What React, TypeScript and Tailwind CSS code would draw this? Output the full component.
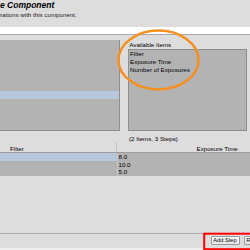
import React from "react";

export default function App() {
  return (
    <div className="relative w-[250px] h-[250px] overflow-hidden bg-[#dddddd] font-['Liberation_Sans',Arial,sans-serif] text-black flex flex-col">
      {/* Header */}
      <div className="h-[27px] shrink-0 pt-[1px] whitespace-nowrap">
        <div className="text-[8.5px] leading-[9px] font-bold italic">e Component</div>
        <div className="mt-[1px] text-[6.2px] leading-[7px] text-[#222]">rations with this component.</div>
      </div>
      {/* white strip */}
      <div className="h-[8px] shrink-0 bg-white border-b border-[#a8a8a8]" />
      {/* middle */}
      <div className="h-[96px] shrink-0 flex">
        <div className="w-[120px] shrink-0 mt-[5px] bg-[#b3b3b3] border-r border-b border-[#8e8e8e] flex flex-col">
          <div className="h-[51px] shrink-0" />
          <div className="h-[8px] shrink-0 bg-[#b7c7dc]" />
        </div>
        <div className="flex-1 pl-[8px] pt-[6px] pr-[3px] flex flex-col whitespace-nowrap">
          <div className="h-[8px] leading-[8px] text-[6.2px] pl-[1.3px]">Available Items</div>
          <div className="flex-1 bg-[#b3b3b3] border border-[#8e8e8e] text-[6.2px] pl-[1px]">
            <div className="h-[8px] leading-[8px]">Filter</div>
            <div className="h-[8px] leading-[8px]">Exposure Time</div>
            <div className="h-[8px] leading-[8px]">Number of Exposures</div>
          </div>
        </div>
      </div>
      {/* status */}
      <div className="h-[7px] shrink-0 mt-[4px] pl-[129px] text-[6.2px] leading-[7px] whitespace-nowrap">(2 Items, 3 Steps)</div>
      {/* table header */}
      <div className="h-[11px] shrink-0 flex border-b border-[#9c9c9c] text-[6.2px] whitespace-nowrap">
        <div className="w-[117px] shrink-0 border-r border-[#c4c4c4] pt-[1.5px] pl-[10px] leading-[10px]">Filter</div>
        <div className="flex-1 pt-[1.5px] pl-[79.5px] leading-[10px]">Exposure Time</div>
      </div>
      {/* rows */}
      <div className="shrink-0 flex flex-col text-[6.2px]">
        {[
          { v: "8.0", sel: true },
          { v: "10.0", sel: false },
          { v: "5.0", sel: false },
        ].map((r, i) => (
          <div key={i} className="h-[7.5px] flex">
            <div className={r.sel ? "w-[117px] shrink-0 bg-[#b7c7dc]" : "w-[117px] shrink-0 bg-[#b3b3b3]"} />
            <div className="w-[1px] shrink-0 bg-[#c6c6c6]" />
            <div className="flex-1 bg-[#b3b3b3] leading-[7.5px] pl-[0.5px]">{r.v}</div>
          </div>
        ))}
      </div>
      <div className="flex-1" />
      {/* bottom bar */}
      <div className="h-[17px] shrink-0 border-t border-[#aaaaaa] border-b-2 border-b-[#eeeeee] flex items-start pt-[2px] pl-[210.5px] gap-[4px] whitespace-nowrap">
        <div className="w-[29px] h-[8.5px] shrink-0 border border-[#9a9a9a] rounded-[1px] bg-gradient-to-b from-white to-[#e4e4e4] text-[5.7px] leading-[7px] text-center">Add Step</div>
        <div className="w-[40px] h-[8.5px] shrink-0 border border-[#9a9a9a] rounded-[1px] bg-gradient-to-b from-white to-[#e4e4e4] text-[5.7px] leading-[7px] text-center">Remove Step</div>
      </div>
      {/* annotations */}
      <svg className="absolute inset-0 pointer-events-none" width="250" height="250" viewBox="0 0 250 250">
        <ellipse cx="158.5" cy="60" rx="40" ry="29.5" fill="none" stroke="#f5901e" strokeWidth="2.5" />
        <rect x="204.2" y="233.7" width="50" height="15.5" fill="none" stroke="#ff0000" strokeWidth="2" />
      </svg>
    </div>
  );
}
